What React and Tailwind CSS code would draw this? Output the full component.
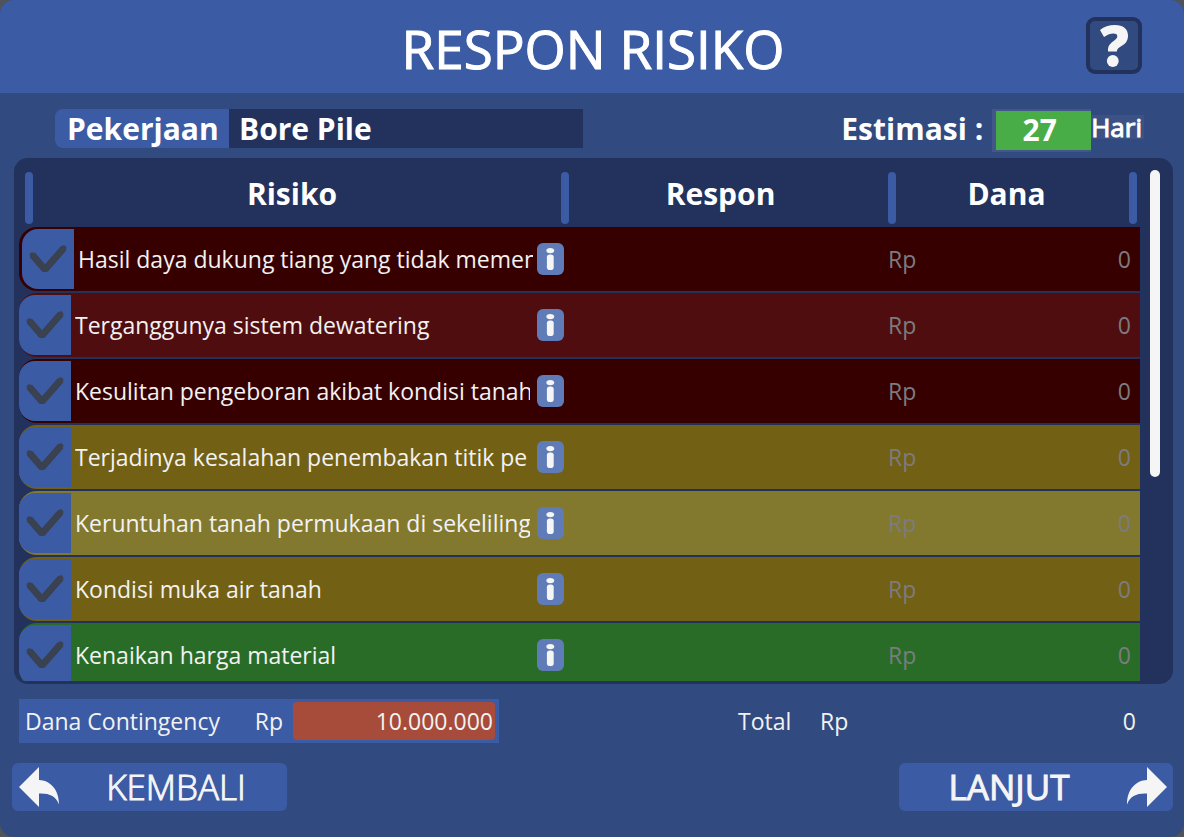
import { useState } from "react";

const RISKS = [
  { text: "Hasil daya dukung tiang yang tidak memen", row: "bg-[#370000]", inset: "pl-[3px]" },
  { text: "Terganggunya sistem dewatering", row: "bg-[#500d0f]", inset: "pl-0" },
  { text: "Kesulitan pengeboran akibat kondisi tanah", row: "bg-[#370000]", inset: "pl-0" },
  { text: "Terjadinya kesalahan penembakan titik pe", row: "bg-[#726015]", inset: "pl-0" },
  { text: "Keruntuhan tanah permukaan di sekeliling", row: "bg-[#82792f]", inset: "pl-0" },
  { text: "Kondisi muka air tanah", row: "bg-[#726015]", inset: "pl-0" },
  { text: "Kenaikan harga material", row: "bg-[#286c28]", inset: "pl-0" },
];

function Bar() {
  return <span className="h-[52px] w-2 shrink-0 rounded-full bg-[#3b5ba5]" />;
}

function CheckIcon() {
  return (
    <svg viewBox="0 0 38 30" className="h-[30px] w-[38px]" fill="none" stroke="#3a4150" aria-hidden="true">
      <path d="M3.200 10.800 L16 25.500 L34.800 4" strokeWidth="7" strokeLinejoin="bevel" />
      <path d="M3.200 10.800 L16 25.500 L34.800 4" strokeWidth="5" strokeLinejoin="round" strokeLinecap="round" />
    </svg>
  );
}

function InfoIcon() {
  return (
    <svg viewBox="0 0 27 32" className="h-8 w-[27px]" aria-hidden="true">
      <rect width="27" height="32" rx="6" fill="#5f7cb8" />
      <ellipse cx="13.3" cy="7.6" rx="3.9" ry="2.7" fill="#f5f5f5" />
      <rect x="9.9" y="11.4" width="6.8" height="15.6" rx="2.8" fill="#f5f5f5" />
    </svg>
  );
}

function ArrowIcon({ className }) {
  return (
    <svg viewBox="0 0 40 40" className={className} fill="#f5f5f5" aria-hidden="true">
      <path d="M0 20 L20 0 V13 C31 13.500 40 22 40 37.500 C37 29 30 26 20 26.500 V40 Z" />
    </svg>
  );
}

function RiskRow({ risk, index }) {
  const [checked, setChecked] = useState(true);
  const id = "risk-" + index;
  return (
    <tr>
      <td className={"h-16 rounded-l-[18px] p-0 " + risk.row + " " + risk.inset}>
        <div className="flex items-center">
          <span className="grid h-[60px] w-[52px] shrink-0 place-items-center rounded-l-2xl bg-[#3b5ba5]">
            <input
              id={id}
              type="checkbox"
              checked={checked}
              onChange={() => setChecked(!checked)}
              className="col-start-1 row-start-1 h-full w-full cursor-pointer appearance-none"
            />
            <span className="pointer-events-none col-start-1 row-start-1">{checked && <CheckIcon />}</span>
          </span>
          <label htmlFor={id} className="ml-1 w-[455px] shrink-0 overflow-hidden text-[23px] leading-8 whitespace-nowrap text-[#f2f2f2]">
            {risk.text}
          </label>
        </div>
      </td>
      <td className={"p-0 " + risk.row}>
        <button type="button" aria-label="Info" className="block cursor-pointer">
          <InfoIcon />
        </button>
      </td>
      <td className={"p-0 pr-[9px] " + risk.row}>
        <div className="flex items-center text-[23px] leading-8 text-[#7c7c7c]">
          <label htmlFor={"dana-" + index}>Rp</label>
          <input
            id={"dana-" + index}
            type="text"
            placeholder="0"
            className="min-w-0 flex-1 bg-transparent text-right outline-none placeholder:text-[#7c7c7c]"
          />
        </div>
      </td>
    </tr>
  );
}

export default function App() {
  return (
    <div className="h-screen bg-[#50545a] font-['Open_Sans','Noto_Sans',sans-serif] text-white">
      <main className="flex h-full flex-col overflow-hidden rounded-[14px] bg-[#314a80]">
        <header className="grid h-[93px] shrink-0 grid-cols-[1fr_auto_1fr] items-center bg-[#3b5ba5] pr-[42px] pb-[2px]">
          <h1 className="col-start-2 pt-[6px] pl-[44px] text-[53px] leading-none [-webkit-text-stroke:1px_white]">RESPON RISIKO</h1>
          <button
            type="button"
            aria-label="Bantuan"
            className="grid h-[57px] w-14 cursor-pointer place-items-center justify-self-end rounded-[9px] border-4 border-[#22325c] bg-[#314a80]"
          >
            <svg viewBox="0 0 28 42" className="h-[42px] w-7" aria-hidden="true">
              <path
                d="M0 5 C4 1.500 9 0 15 0 C23 0 28 4 28 10.500 C28 15.500 26 18.500 21.500 21 C18 23.300 17 24 17 26.500 H8 C7.800 21.500 9 19.500 13 16.500 C16 14.500 17.300 13 17.300 11.300 C17.300 9.200 15.800 8.500 13.300 8.500 C10.500 8.500 7.500 9.500 4 12 Z"
                fill="#f5f5f5"
              />
              <circle cx="12.800" cy="36" r="5.900" fill="#f5f5f5" />
            </svg>
          </button>
        </header>

        <section className="flex h-[65px] shrink-0 items-start pt-4 pr-10 pl-[55px] text-[30px] leading-[39px] font-bold">
          <label htmlFor="pekerjaan" className="w-[174px] rounded-l-lg bg-[#3b5ba5] pl-3">
            Pekerjaan
          </label>
          <input
            id="pekerjaan"
            type="text"
            readOnly
            value="Bore Pile"
            className="h-[39px] w-[354px] bg-[#22325c] pl-[10px] outline-none"
          />
          <span className="ml-auto pr-[9px]">Estimasi :</span>
          <output className="h-[43px] w-[99px] border-2 border-r-0 border-l-4 border-[#42568a] bg-[#49ad47] pr-2 text-center leading-[37px]">27</output>
          <span className="mt-[6px] bg-[#3c5285] pr-[2px] text-[26px] leading-6 font-normal [-webkit-text-stroke:1px_white]">Hari</span>
        </section>

        <section className="mr-[11px] ml-[14px] flex min-h-0 flex-1 rounded-[14px] bg-[#22325c] pb-[3px]">
          <div className="ml-[5px] min-w-0 flex-1 overflow-hidden">
            <table className="w-full table-fixed border-separate border-spacing-x-0 border-spacing-y-[2px]">
              <colgroup>
                <col className="w-[518px]" />
                <col />
                <col className="w-[252px]" />
              </colgroup>
              <thead className="text-[30px] font-bold">
                <tr>
                  <th colSpan={2} className="p-0">
                    <div className="flex h-[65px] pt-3 pl-[6px]">
                      <Bar />
                      <span className="flex w-[528px] shrink-0 justify-center pr-[10px] leading-[44px]">Risiko</span>
                      <Bar />
                      <span className="flex-1 pr-4 text-center leading-[44px]">Respon</span>
                    </div>
                  </th>
                  <th className="p-0">
                    <div className="flex h-[65px] pt-3 pr-[3px]">
                      <Bar />
                      <span className="flex-1 pr-3 text-center leading-[44px]">Dana</span>
                      <Bar />
                    </div>
                  </th>
                </tr>
              </thead>
              <tbody>
                {RISKS.map((risk, i) => (
                  <RiskRow key={risk.text} risk={risk} index={i} />
                ))}
              </tbody>
            </table>
          </div>
          <div className="mt-3 mr-[13px] ml-[10px] w-[10px]">
            <div className="h-3/5 rounded-full bg-[#f5f5f5]" />
          </div>
        </section>

        <section className="mt-[15px] mr-12 ml-[19px] flex shrink-0 items-center text-[23px] text-[#f2f2f2]">
          <div className="flex h-11 w-[480px] items-center bg-[#3b5ba5] pr-1 pl-[6px]">
            <label htmlFor="contingency">Dana Contingency</label>
            <span className="ml-auto pr-[10px]">Rp</span>
            <input
              id="contingency"
              type="text"
              defaultValue="10.000.000"
              className="h-[38px] w-[202px] rounded bg-[#a74b3a] pr-[2px] text-right outline-none"
            />
          </div>
          <span className="ml-auto w-[82px]">Total</span>
          <span className="w-[200px]">Rp</span>
          <output className="w-[116px] text-right">0</output>
        </section>

        <footer className="mt-5 mr-[11px] mb-[26px] ml-3 flex shrink-0 justify-between text-[35px] text-[#f5f5f5]">
          <button type="button" className="flex h-12 w-[275px] cursor-pointer items-center rounded-md bg-[#3b5ba5] pl-[7px]">
            <ArrowIcon className="h-10 w-10" />
            <span className="flex-1 pl-[6px] text-center font-light [-webkit-text-stroke:1px_#f5f5f5]">KEMBALI</span>
          </button>
          <button type="button" className="flex h-12 w-[274px] cursor-pointer items-center rounded-md bg-[#3b5ba5] pr-[6px]">
            <span className="flex-1 pr-2 text-center [-webkit-text-stroke:1px_#f5f5f5]">LANJUT</span>
            <ArrowIcon className="h-10 w-10 -scale-x-100" />
          </button>
        </footer>
      </main>
    </div>
  );
}
